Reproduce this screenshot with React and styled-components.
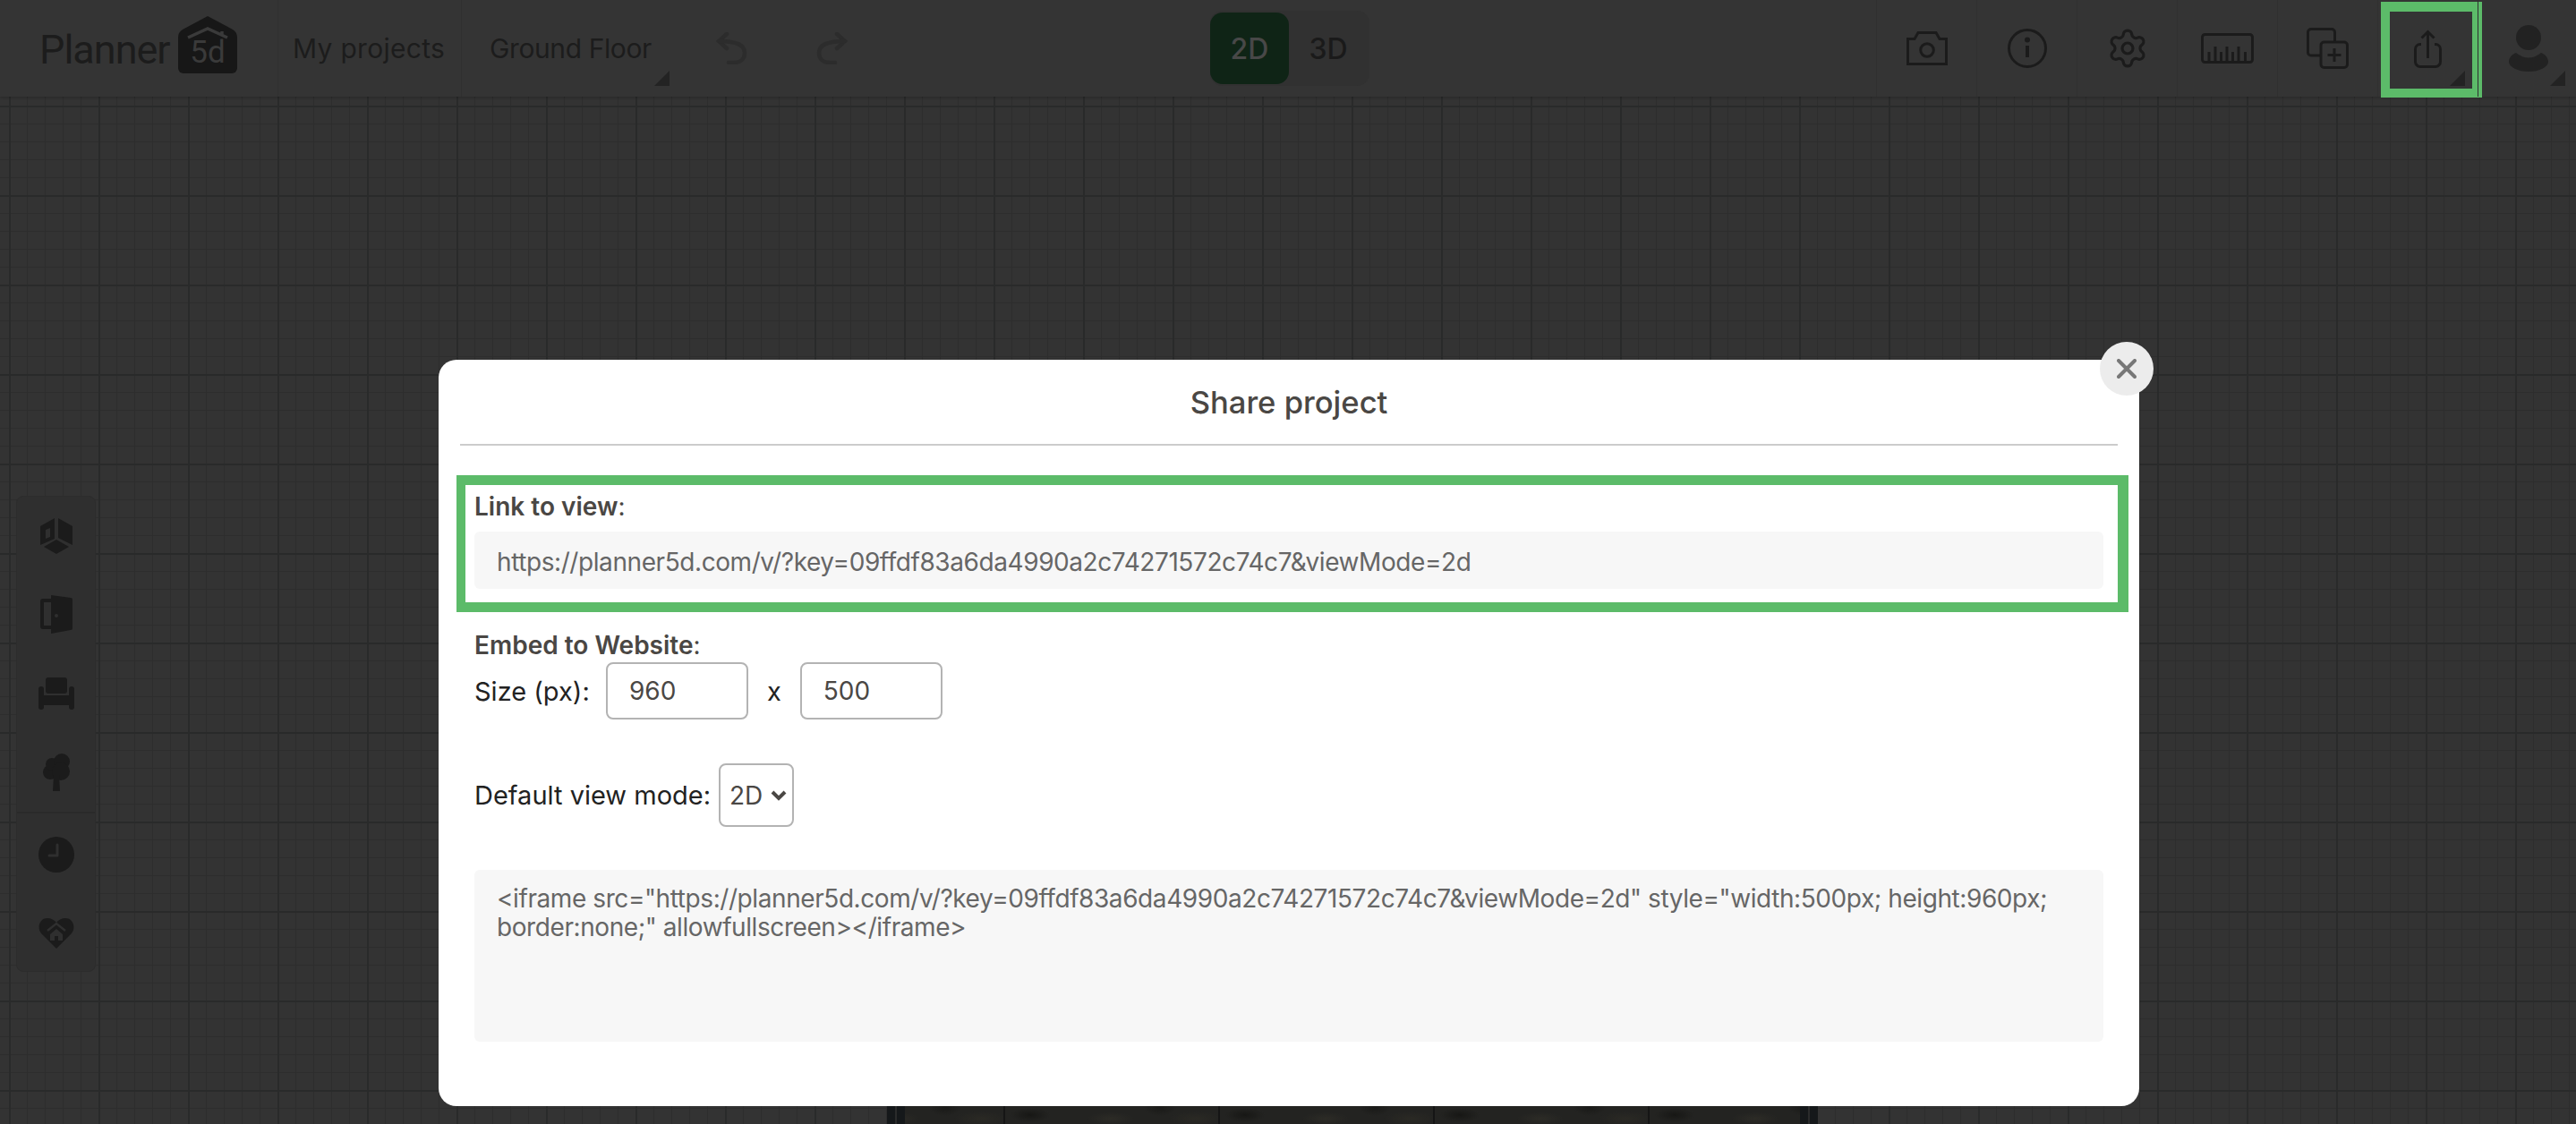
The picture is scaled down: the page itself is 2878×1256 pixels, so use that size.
import React from "react";
import styled, { createGlobalStyle } from "styled-components";
import { Settings } from "lucide-react";

const GlobalStyle = createGlobalStyle`
	html, body {
		margin: 0;
		padding: 0;
		background: #333;
	}
	* {
		box-sizing: border-box;
	}
`;

const ICON = "#1b1b1b";

function CameraIcon() {
	return (
		<svg width="46" height="38" viewBox="0 0 46 38" fill="none" stroke={ICON} strokeWidth="3">
			<path d="M1.500 8.500H9L13 1.500H33L37 8.500H44.500V36.500H1.500z" />
			<circle cx="23" cy="21" r="7.300" />
		</svg>
	);
}

function InfoIcon() {
	return (
		<svg width="44" height="44" viewBox="0 0 44 44" fill="none" stroke={ICON} strokeWidth="3">
			<circle cx="22" cy="22" r="20.500" />
			<path d="M22 19v13" strokeWidth="4" />
			<circle cx="22" cy="12.500" r="3" fill={ICON} stroke="none" />
		</svg>
	);
}

function RulerIcon() {
	return (
		<svg width="59" height="34" viewBox="0 0 59 34" fill="none" stroke={ICON} strokeWidth="3">
			<rect x="1.500" y="1.500" width="56" height="31" rx="3" />
			<path d="M9 32V21M16 32V15M22.500 32V21M29 32V15M35.500 32V21M42 32V15M49.500 32V21" />
		</svg>
	);
}

function CopyIcon() {
	return (
		<svg width="47" height="46" viewBox="0 0 47 46" fill="none" stroke={ICON} strokeWidth="3">
			<path d="M15 31H5a3.500 3.500 0 0 1-3.500-3.500V5A3.500 3.500 0 0 1 5 1.500h23A3.500 3.500 0 0 1 31.500 5v10" />
			<rect x="16" y="16" width="29.500" height="28.500" rx="3.500" />
			<path d="M31 23v15M23.500 30.500h15" />
		</svg>
	);
}

function ShareIcon() {
	return (
		<svg width="31" height="43" viewBox="0 0 31 43" fill="none" stroke={ICON} strokeWidth="3">
			<path d="M8 16.500H7a5.500 5.500 0 0 0-5.500 5.500v14A5.500 5.500 0 0 0 7 41.500h17a5.500 5.500 0 0 0 5.500-5.500V22a5.500 5.500 0 0 0-5.500-5.500h-1" />
			<path d="M15.500 32V2.500M8.500 9.500l7-7 7 7" />
		</svg>
	);
}

function UserIcon() {
	return (
		<svg width="44" height="52" viewBox="0 0 44 52" fill="#222">
			<circle cx="22" cy="14" r="14" />
			<path d="M8 31Q22 42 36 31C42 33 44 38 44 41C44 47 34 52 22 52C10 52 0 47 0 41C0 38 2 33 8 31z" />
		</svg>
	);
}

function UndoIcon({ flip }) {
	return (
		<FlipSvg $flip={ flip } width="35" height="36" viewBox="0 0 35 36" fill="none" stroke="#2c2c2c" strokeWidth="4.500" strokeLinecap="round">
			<path d="M12 2L3 10l9 8" />
			<path d="M4 10C24 10 32 15 32 23C32 30 27 34 20 34H14" />
		</FlipSvg>
	);
}

function BlocksIcon() {
	return (
		<svg width="36" height="40" viewBox="0 0 36 40" fill={ICON}>
			<path d="M16 0v23L0 30V9z" />
			<path d="M20 0l16 9v21l-16-8z" />
			<path d="M18 24l14 8-14 8-14-8z" />
			<path d="M6 13l5-2v10l-5 2z" fill="#2f2f2f" />
		</svg>
	);
}

function DoorIcon() {
	return (
		<svg width="36" height="44" viewBox="0 0 36 44" fill={ICON}>
			<path d="M13 4H3a3 3 0 0 0-3 3v28a3 3 0 0 0 3 3h10v-4H4V8h9z" />
			<path d="M12 0l22 3a2 2 0 0 1 2 2v32a2 2 0 0 1-2 2l-22 4z" />
			<circle cx="18" cy="23" r="2" fill="#2f2f2f" />
		</svg>
	);
}

function SofaIcon() {
	return (
		<svg width="40" height="36" viewBox="0 0 40 36" fill={ICON}>
			<rect x="8" y="0" width="24" height="18" rx="3" />
			<rect x="0" y="10" width="6" height="26" rx="3" />
			<rect x="34" y="10" width="6" height="26" rx="3" />
			<rect x="5" y="20" width="30" height="11" />
		</svg>
	);
}

function TreeIcon() {
	return (
		<svg width="32" height="42" viewBox="0 0 32 42" fill={ICON}>
			<circle cx="9" cy="21" r="8" />
			<circle cx="11" cy="12" r="7" />
			<circle cx="22" cy="9" r="9" />
			<circle cx="21" cy="20" r="10" />
			<path d="M13 24h6l1 18h-8z" />
		</svg>
	);
}

function ClockIcon() {
	return (
		<svg width="40" height="40" viewBox="0 0 40 40">
			<circle cx="20" cy="20" r="20" fill={ICON} />
			<path d="M21 9v12h-9" fill="none" stroke="#2f2f2f" strokeWidth="3" strokeLinecap="round" strokeLinejoin="round" />
		</svg>
	);
}

function HeartIcon() {
	return (
		<svg width="40" height="34" viewBox="0 0 40 34">
			<path d="M20 34L3 17C-2 11 1 0 10 0c4 0 8 2 10 5 2-3 6-5 10-5 9 0 12 11 7 17z" fill={ICON} />
			<path d="M10 14l10-8 10 8" fill="none" stroke="#2f2f2f" strokeWidth="2.500" />
			<path d="M13 18l7-6 7 6v7h-5v-5h-4v5h-5z" fill="#2f2f2f" />
		</svg>
	);
}

function App() {
	return (
		<Page>
			<GlobalStyle />
			<Header>
				<LeftGroup>
					<LogoCell>
						<LogoText>Planner</LogoText>
						<LogoHouse>
							<svg width="66" height="64" viewBox="0 0 66 64" fill="none">
								<path d="M33 0L61 15Q66 18 66 24V58a6 6 0 0 1-6 6H6a6 6 0 0 1-6-6V24Q0 18 5 15z" fill="#171717" />
								<path d="M11 24L33 14L55 24M49 17v5" stroke="#3a3a3a" strokeWidth="3.500" />
								<text x="33" y="52" textAnchor="middle" fontFamily="Roboto, sans-serif" fontSize="35" fill="#3a3a3a">5d</text>
							</svg>
						</LogoHouse>
					</LogoCell>
					<NavCell $width={ 205 } $pad={ 16 } $spacing={ 0.3 }>My projects</NavCell>
					<NavCell $width={ 250 } $pad={ 31 } $spacing={ -0.4 }>
						Ground Floor
						<Corner $right={ 17 } />
					</NavCell>
					<HistoryCell $padLeft={ 35 }><UndoIcon /></HistoryCell>
					<HistoryCell $padLeft={ 37 }><UndoIcon flip /></HistoryCell>
				</LeftGroup>
				<ModeToggle>
					<ModeButton $active>2D</ModeButton>
					<ModeButton>3D</ModeButton>
				</ModeToggle>
				<RightGroup>
					<ToolCell><CameraIcon /></ToolCell>
					<ToolCell><InfoIcon /></ToolCell>
					<ToolCell><Settings size={ 48 } color={ ICON } strokeWidth={ 1.6 } /></ToolCell>
					<ToolCell><RulerIcon /></ToolCell>
					<ToolCell><CopyIcon /></ToolCell>
					<ToolCell>
						<ShareIcon />
						<Corner $right={ 14 } />
						<HighlightFrame />
					</ToolCell>
					<ToolCell>
						<UserIcon />
						<Corner $right={ 14 } />
					</ToolCell>
				</RightGroup>
			</Header>

			<Room>
				<RoomFloor />
			</Room>

			<SidePanel>
				<SideGroup>
					<SideItem><BlocksIcon /></SideItem>
					<SideItem><DoorIcon /></SideItem>
					<SideItem><SofaIcon /></SideItem>
					<SideItem><TreeIcon /></SideItem>
				</SideGroup>
				<SideGroup $divided>
					<SideItem><ClockIcon /></SideItem>
					<SideItem><HeartIcon /></SideItem>
				</SideGroup>
			</SidePanel>

			<Modal>
				<CloseButton>
					<svg width="22" height="22" viewBox="0 0 22 22" fill="none" stroke="#777" strokeWidth="4" strokeLinecap="round">
						<path d="M2 2l18 18M20 2L2 20" />
					</svg>
				</CloseButton>
				<ModalTitle>Share project</ModalTitle>
				<LinkBox>
					<Label><b>Link to view</b>:</Label>
					<LinkField>https://planner5d.com/v/?key=09ffdf83a6da4990a2c74271572c74c7&amp;viewMode=2d</LinkField>
				</LinkBox>
				<EmbedBlock>
					<Label><b>Embed to Website</b>:</Label>
					<SizeRow>
						<RowText $width={ 126 }>Size (px):</RowText>
						<SizeInput defaultValue="960" />
						<RowText>x</RowText>
						<SizeInput defaultValue="500" />
					</SizeRow>
					<ModeRow>
						<RowText>Default view mode:</RowText>
						<SelectWrap>
							<ModeSelect defaultValue="2D">
								<option>2D</option>
								<option>3D</option>
							</ModeSelect>
							<Chevron width="18" height="12" viewBox="0 0 18 12" fill="none" stroke="#4a4744" strokeWidth="4">
								<path d="M2 2l7 7 7-7" />
							</Chevron>
						</SelectWrap>
					</ModeRow>
					<CodeField>
						&lt;iframe src="https://planner5d.com/v/?key=09ffdf83a6da4990a2c74271572c74c7&amp;viewMode=2d" style="width:500px; height:960px; border:none;" allowfullscreen&gt;&lt;/iframe&gt;
					</CodeField>
				</EmbedBlock>
			</Modal>
		</Page>
	);
}

const Page = styled.div`
	position: relative;
	width: 2878px;
	height: 1256px;
	overflow: hidden;
	font-family: Inter, "Liberation Sans", sans-serif;
	background-color: #333;
	background-image:
		linear-gradient(to right, #292a2a 2px, transparent 2px),
		linear-gradient(to bottom, #292a2a 2px, transparent 2px),
		linear-gradient(to right, #2d2d2d 1px, transparent 1px),
		linear-gradient(to bottom, #2d2d2d 1px, transparent 1px);
	background-size: 100px 100px, 100px 100px, 20px 20px, 20px 20px;
	background-position: 10px 18px, 10px 18px, 10px 18px, 10px 18px;
`;

const Header = styled.header`
	display: grid;
	grid-template-columns: 1fr auto 1fr;
	height: 108px;
	background: #343434;
	box-shadow: 0 1px 3px rgba(0, 0, 0, 0.25);
`;

const LeftGroup = styled.div`
	display: flex;
	align-items: stretch;
`;

const LogoCell = styled.div`
	display: flex;
	align-items: center;
	width: 310px;
	padding: 0 0 0 44px;
	gap: 9px;
`;

const LogoText = styled.span`
	font-family: Roboto, sans-serif;
	font-weight: 400;
	font-size: 45px;
	letter-spacing: -1px;
	color: #1c1c1c;
	padding-top: 2px;
`;

const LogoHouse = styled.span`
	display: flex;
	margin-bottom: 8px;
`;

const NavCell = styled.div`
	position: relative;
	display: flex;
	align-items: center;
	width: ${(p) => p.$width}px;
	padding-left: ${(p) => p.$pad}px;
	font-size: 30px;
	letter-spacing: ${(p) => p.$spacing}px;
	color: #1c1c1c;
	border-left: 1px solid #303030;
`;

const HistoryCell = styled.div`
	display: flex;
	align-items: center;
	width: 110px;
	padding-left: ${(p) => p.$padLeft}px;
`;

const FlipSvg = styled.svg`
	transform: ${(p) => (p.$flip ? "scaleX(-1)" : "none")};
`;

const Corner = styled.span`
	position: absolute;
	right: ${(p) => p.$right}px;
	bottom: 12px;
	width: 0;
	height: 0;
	border-style: solid;
	border-width: 0 0 17px 17px;
	border-color: transparent transparent #232323 transparent;
`;

const ModeToggle = styled.div`
	display: flex;
	align-self: center;
	margin-left: 4px;
	width: 178px;
	height: 84px;
	padding: 2px 0;
	background: #313131;
	border-radius: 14px;
`;

const ModeButton = styled.div`
	display: flex;
	align-items: center;
	justify-content: center;
	width: 88px;
	border-radius: 14px;
	font-size: 32px;
	font-weight: 500;
	background: ${(p) => (p.$active ? "#0f2416" : "transparent")};
	color: ${(p) => (p.$active ? "#484848" : "#1a1a1a")};
`;

const RightGroup = styled.div`
	display: flex;
	justify-content: flex-end;
	margin-right: -2px;
`;

const ToolCell = styled.div`
	position: relative;
	display: flex;
	align-items: center;
	justify-content: center;
	flex: none;
	width: 112px;
	border-left: 1px solid #303030;
`;

const HighlightFrame = styled.span`
	position: absolute;
	left: 3px;
	right: -5px;
	top: 2px;
	bottom: -1px;
	border: solid #5cbb69;
	border-width: 11px 11px 10px 10px;
`;

const Room = styled.div`
	position: absolute;
	left: 991px;
	top: 1100px;
	width: 1040px;
	height: 156px;
	padding: 0 20px;
	background:
		linear-gradient(to right, #15181a 9px, #2a2b2b 9px 11px, #15181a 11px) left / 20px 100% no-repeat,
		linear-gradient(to left, #15181a 9px, #2a2b2b 9px 11px, #15181a 11px) right / 20px 100% no-repeat;
`;

const RoomFloor = styled.div`
	height: 100%;
	background-color: #232321;
	background-image:
		linear-gradient(to right, #151515 2px, transparent 2px),
		radial-gradient(ellipse 22px 8px at 30px 146px, #171715, transparent),
		radial-gradient(ellipse 26px 7px at 120px 150px, #2c2b26, transparent),
		radial-gradient(ellipse 18px 9px at 175px 138px, #1a1a18, transparent),
		radial-gradient(ellipse 30px 8px at 215px 150px, #2a2924, transparent);
	background-size: 240px 100%;
	background-position: 110px 0;
`;

const SidePanel = styled.aside`
	position: absolute;
	left: 18px;
	top: 554px;
	width: 89px;
	height: 532px;
	background: #2f2f2f;
	border: 1px solid #2c2c2c;
	border-radius: 8px;
`;

const SideGroup = styled.div`
	display: flex;
	flex-direction: column;
	padding-top: ${(p) => (p.$divided ? "2px" : "0")};
	border-top: ${(p) => (p.$divided ? "2px solid #2a2a2a" : "none")};
`;

const SideItem = styled.div`
	display: flex;
	align-items: center;
	justify-content: center;
	height: 88px;
`;

const Modal = styled.section`
	position: absolute;
	left: 490px;
	top: 402px;
	width: 1900px;
	height: 834px;
	padding: 0 24px;
	background: #fff;
	border-radius: 20px;
	color: #4a4744;
`;

const CloseButton = styled.button`
	position: absolute;
	top: -20px;
	right: -16px;
	display: flex;
	align-items: center;
	justify-content: center;
	width: 60px;
	height: 60px;
	padding: 0;
	background: #ececec;
	border: none;
	border-radius: 50%;
`;

const ModalTitle = styled.h2`
	margin: 0;
	height: 96px;
	line-height: 94px;
	text-align: center;
	font-size: 34.600px;
	font-weight: 500;
	color: #4a4744;
	border-bottom: 2px solid #ccc;
`;

const LinkBox = styled.div`
	margin: 33px -12px 0 -4px;
	padding: 0 16px 16px 10px;
	height: 153px;
	border: solid #5cbb69;
	border-width: 11px 12px 11px 10px;
`;

const Label = styled.div`
	font-size: 28px;
	line-height: 34px;
	padding-top: 7px;
	color: #4a4744;

	b {
		font-weight: 600;
	}
`;

const LinkField = styled.div`
	display: flex;
	align-items: center;
	height: 64px;
	margin-top: 11px;
	padding: 4px 0 0 25px;
	background: #f7f7f7;
	border-radius: 6px;
	font-size: 28px;
	letter-spacing: -0.420px;
	color: #666;
`;

const EmbedBlock = styled.div`
	padding: 13px 16px 0;
`;

const SizeRow = styled.div`
	display: flex;
	align-items: center;
	height: 64px;
	margin-top: 2px;
	gap: 21px;
`;

const RowText = styled.span`
	font-size: 29px;
	color: #222;
	white-space: nowrap;
	${(p) => (p.$width ? `width: ${p.$width}px;` : "")}
`;

const SizeInput = styled.input`
	width: 159px;
	height: 64px;
	padding: 0 24px;
	border: 2px solid #b3b3b3;
	border-radius: 8px;
	background: #fff;
	font-family: inherit;
	font-size: 28px;
	color: #4a4744;
`;

const ModeRow = styled.div`
	display: flex;
	align-items: center;
	margin-top: 49px;
	gap: 9px;
`;

const SelectWrap = styled.span`
	position: relative;
	display: flex;
`;

const ModeSelect = styled.select`
	appearance: none;
	width: 84px;
	height: 71px;
	padding: 0 10px;
	border: 2px solid #b3b3b3;
	border-radius: 8px;
	background: #fff;
	font-family: inherit;
	font-size: 28px;
	color: #4a4744;
`;

const Chevron = styled.svg`
	position: absolute;
	right: 8px;
	top: 30px;
	pointer-events: none;
`;

const CodeField = styled.div`
	height: 192px;
	margin-top: 48px;
	padding: 16px 25px;
	background: #f7f7f7;
	border-radius: 6px;
	font-size: 28px;
	line-height: 32px;
	letter-spacing: -0.420px;
	color: #666;
`;

export default App;
